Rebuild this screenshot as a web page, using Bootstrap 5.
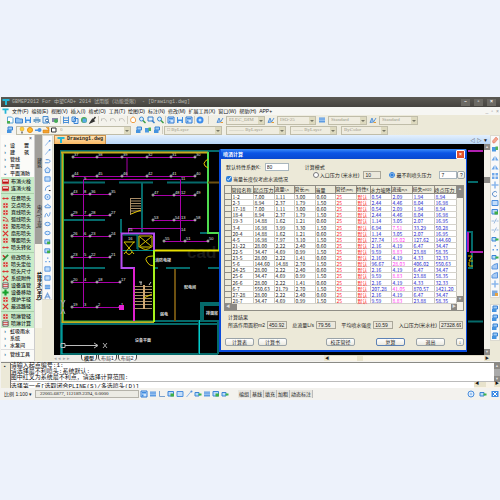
<!DOCTYPE html>
<html lang="zh-CN">
<head>
<meta charset="utf-8">
<meta name="viewport" content="width=device-width, initial-scale=1">
<title>GBMEP2012 For 中望CAD+ 2014</title>
<link href="https://cdn.jsdelivr.net/npm/bootstrap@5.3.0/dist/css/bootstrap.min.css" rel="stylesheet">
<style>
:root{--face:#ece9d8;--pale:#f3f2ee;--line:#b9b5a5}
body{background:#edf2fb;font:5px/7px "Liberation Sans","Noto Sans CJK SC",sans-serif;color:#222;overflow-x:hidden}
svg.ic{width:8px;height:8px;flex:none;display:block}
button,select,input,a{font:inherit;color:inherit}
.app-win{margin-top:97px;padding-left:1px;background:var(--pale)}
.title-bar{background:linear-gradient(#5b5953,#45433f);height:10px;color:#b9b7b0;padding:0 4px 0 1px;gap:2px;font-family:"Liberation Mono","Noto Sans CJK SC",monospace}
.title-bar .ctl{color:#fff;background:#6b6963;border:0;width:9px;height:7px;padding:0;line-height:7px;font-weight:700;margin-left:2px}
.menu-bar{height:8px;padding:0 1px;gap:3px;background:#f6f6f3}
.menu-bar svg.ic{width:7px}
.menu-bar a{color:#111;text-decoration:none;white-space:nowrap}
.mdi{color:#999;gap:3px}
.tool-row{height:10px;background:linear-gradient(90deg,#f6f5f1,#efede2 300px,var(--face) 415px);padding-left:5px}
.tool-row .grp{gap:1px}
.sep{width:1px;height:8px;background:#cfccbe;margin:0 1px}
.combo{appearance:none;height:9px;padding:0 8px 0 2px;border:1px solid #c0bda9;border-radius:0;color:#9c998c;opacity:1;background:#efecdf url("data:image/svg+xml,%3Csvg xmlns='http://www.w3.org/2000/svg' width='6' height='7'%3E%3Cpath d='M0 0h6v7H0z' fill='%23ddd9be'/%3E%3Cpath d='M1 3h4l-2 2z' fill='%23776'/%3E%3C/svg%3E") no-repeat right center;font-family:"Liberation Serif",serif;line-height:6px}
.w-38{width:39px}.w-58{width:58px}.w-46{width:47px}.w-61{width:60px}
.sty-set{gap:2px;margin-left:2px}
.layer-box{width:115px;height:9px;border:1px solid #c0bda9;background:#f6f4ea;padding-left:1px;margin-left:2px}
.layer-box .combo{border:0;height:7px;background-color:transparent}
.palette{width:34px;background:#fbfbf8;border-right:1px solid #ccc}
.palette .hd{height:7px;color:#444;padding:0 2px}
.palette button{display:flex;align-items:center;gap:2px;height:7px;line-height:7px;padding:0 0 0 1px;border:0;background:none;width:100%;white-space:nowrap;color:#222;font-weight:500;text-align:left}
.palette .arw{width:6px;color:#27638c;font-weight:700;text-align:center}
.palette svg.ic{width:7px;height:7px}
.palette .green{background:#c9ecc9;padding:1px 0}
.palette .green>div{padding-bottom:1px;margin-bottom:1px;border-bottom:1px solid #a9cfaa}
.palette .green>div:last-child{border:0;margin:0;padding:0}
.palette .spread{display:flex;justify-content:space-between;width:19px}
.last-list{height:12px;overflow:hidden;padding-top:1px;border-top:1px solid #ddd}
.side-tabs{width:7px;background:#efecd9}
.side-tabs button{writing-mode:vertical-rl;border:0;width:7px;padding:0;line-height:7px;background:#a19f9a;color:#222}
.side-tabs .t1{height:55px}.side-tabs .t2{height:54px}
.side-tabs .t3{height:84px;background:#f6f4e8;font-weight:700;color:#000}
.draw-bar{width:12px;background:var(--face)}
.draw-bar .strip,.mod-bar .strip{background:#f9f9f9;border:1px solid #dcdad0;gap:1px;padding:3px 1px 0;width:11px;align-items:center}
.draw-bar .strip{height:165px}
.draw-bar .strip svg{width:7px}
.mod-bar{width:10px;background:var(--face);gap:2px}
.mod-bar .strip{width:10px;padding:0}
.doc-tabs{height:9px;background:linear-gradient(#e4f0fd,#b8d6f8);padding-right:2px}
.doc-tabs a{background:linear-gradient(#ffe3b5,#fbb862);border:1px solid #c9924f;border-bottom:0;width:52px;color:#222;text-decoration:none;font:700 5px/7px "Liberation Mono",monospace;padding-left:2px;gap:2px}
.doc-col,.draw-area{min-width:0}
.draw-area{background:#000}
.draw-area>svg{display:block;width:429px;height:211px}
.vscroll{width:6px;background:#f4f2ea}
.vscroll span,.gbtn{display:block;width:6px;height:6px;background:#8b8985;color:#ddd;text-align:center;line-height:6px;font-size:4px}
.vscroll .thumb{margin:27px 0 auto}
.layout-tabs{height:6px;background:#ecebe6;color:#222}
.layout-tabs .nav-a{width:27px;color:#aaa;white-space:nowrap;line-height:6px}
.layout-tabs .lt{background:#fafafa;border:0;border-left:1px solid #444;border-right:1px solid #444;border-radius:0 0 4px 4px;height:6px;line-height:6px;padding:0 2px;margin-right:1px}
.hscroll{width:166px;background:#f8f3e6;border-top:1px solid #e0dbc8}
.hscroll b,.cmd-h b{display:block;width:6px;background:#e8e3cc;text-align:center;line-height:5px;font-size:4px;height:5px}
.hscroll .thumb{margin:0 auto 0 27px}
.cmd{border-top:1px solid #8a8a85;margin-top:1px;padding-left:3px;background:var(--face)}
.cmd-body{background:#fff;border-left:1px solid #777;font:6px/6px "Liberation Mono","Noto Sans CJK SC",monospace;color:#111}
.cmd-body p{margin:0;border-bottom:1px solid #bbb;white-space:nowrap}
.cmd-body .cs{background:#aaa}
.cmd-body input{border:0;padding:0;height:6px;line-height:6px;background:#fff;min-width:0}
.cmd-h{width:26px;background:#f8f3e6;height:6px}
.status{height:12px;background:var(--pale);padding:0 1px 0 3px;gap:1px}
.status .scale{width:30px;white-space:nowrap}
.status .coord{width:104px;border:1px solid #b5b3aa;height:8px;line-height:6px;background:#ecebe4;padding-left:4px;font-family:"Liberation Serif",serif;white-space:nowrap}
.status .ics{gap:1px}
.status button{border:0;border-right:1px solid #bbb;padding:0 1px;background:#e7e6e0;line-height:8px;white-space:nowrap}
/* calculation dialog, floats over the drawing */
.calc{position:absolute;left:165px;top:5px;width:248px;border:solid #0a4bdc;border-width:0 1px 2px 2px;background:var(--face);z-index:2;border-radius:2px 2px 0 0}
.calc .cap{height:10px;background:linear-gradient(#3c8cf8,#0a55e6 40%,#0848cf);color:#fff;font-weight:700;padding:0 1px 0 2px}
.calc .cap button{width:9px;height:9px;padding:0;border:1px solid #fff;border-radius:1px;background:#e2502b;line-height:7px;font-weight:700}
.calc label,.calc .lbl{white-space:nowrap;line-height:8px}
.calc .fld{height:8px;border:1px solid #a9b6bd;background:#fff;padding:0 1px;line-height:6px;border-radius:0;min-width:0}
.calc .fld.ro{background:#ebe8dc;border-color:#aaa79a}
.calc .s18{width:18px}.calc .s20{width:20px}.calc .s24{width:24px}
.calc .pt{width:6px;height:6px;margin:0 1px 0 0;accent-color:#2f7fd8;flex:none}
.calc .top-area{padding:4px 4px 0 5px;height:26px}
.calc .btn-c{width:29px;height:8px;border:1px solid #9aa3a8;border-radius:2px;background:linear-gradient(#fff,#ebe9df);padding:0;line-height:6px}
.calc .btn-c.tiny{width:8px}
.calc .btn-c.focus-b{border-color:#5d82b5}
.grid-box{margin:0 2px 0 3px;border:1px solid #8f8d85;background:#fff}
.grid-t{border-collapse:collapse;table-layout:fixed;width:100%;height:118px;font:5px/5px "Liberation Sans Narrow","Noto Sans CJK SC",sans-serif}
.grid-t th,.grid-t td{padding:0 0 0 1px;border-right:1px solid #c9c7bf;border-bottom:1px solid #d4d2cb;white-space:nowrap;color:#222;font-weight:400;line-height:5px}
.grid-t th{background:var(--face);border-color:#8f8d85;padding:0}
.grid-t .un{font-size:3px}
.grid-t .r{color:#f22}.grid-t .b{color:#22c}.grid-t .m{color:#f3e}
.grid-t .c6{width:6px}.grid-t .c14{width:14px}.grid-t .c20{width:20px}.grid-t .c21{width:21px}.grid-t .c22{width:22px}
.gs{width:6px;background:#f5f3ea}
.res{padding:2px 3px 0 7px;height:22px}
.res span{gap:2px}
.foot{padding:5px 2px 4px 4px;gap:4px}
.foot .g-a{margin-right:17px}.foot .g-b{margin-right:7px}
</style>
<script src="https://cdn.jsdelivr.net/npm/bootstrap@5.3.0/dist/js/bootstrap.bundle.min.js"></script>
</head>
<body>
<svg width="0" height="0" class="position-absolute" aria-hidden="true"><defs>
<g id="new"><path d="M3 2h8l3 3v9H3z" fill="#fff" stroke="#5aa7d8" stroke-width="2"/><path d="M2 10h6v5H2z" fill="#4cae4c"/></g>
<g id="open"><path d="M1 4h6l2 2h6v8H1z" fill="#8cc0f2" stroke="#3f80cc" stroke-width="2"/></g>
<g id="save"><path d="M2 2h12v12H2z" fill="#3e8ee0"/><path d="M4 2h8v5H4zM5 10h6v4H5z" fill="#e2f0ff"/></g>
<g id="print"><path d="M4 2h8v4H4zM1 6h14v6H1zM4 10h8v4H4z" fill="#6d9fc4"/><path d="M4 3h8v2H4zM5 11h6v2H5z" fill="#fff"/></g>
<g id="prev"><path d="M2 1h10v13H2z" fill="#dcecfb" stroke="#4a8fd0" stroke-width="2"/><circle cx="10" cy="9" r="3" fill="#fff" stroke="#2965a5" stroke-width="2"/><path d="M12 11l3 4" stroke="#2965a5" stroke-width="2"/></g>
<g id="pub"><path d="M2 4h12v8H2z" fill="#88a"/><circle cx="10" cy="10" r="4" fill="#47ad55"/></g>
<g id="cut"><path d="M3 1v14M13 1v14M3 4h10M3 9h10M3 13h10" stroke="#4a90d8" stroke-width="2"/></g>
<g id="copy"><path d="M2 2h7v9H2zM6 5h8v10H6z" fill="#d7ebff" stroke="#3b83d2" stroke-width="2"/></g>
<g id="paste"><circle cx="8" cy="8" r="6" fill="#48a64f"/><path d="M5 5h8v8H5z" fill="#58a9e8"/></g>
<g id="brush"><path d="M3 13l4-6 3 3zM8 8l5-6" stroke="#333" stroke-width="3" fill="#3867a8"/></g>
<g id="undo"><path d="M3 10V5M3 7c5-4 9-1 10 4" fill="none" stroke="#c3c2bd" stroke-width="2"/></g>
<g id="pan"><path d="M8 2c5 0 7 8 3 11H6C2 11 2 4 8 2z" fill="#fff" stroke="#f09a3e" stroke-width="2"/></g>
<g id="zoom"><circle cx="7" cy="6" r="4" fill="#d9efff" stroke="#3d88d0" stroke-width="2"/><path d="M10 9l5 5" stroke="#3d9d45" stroke-width="3"/></g>
<g id="zwin"><path d="M2 2h10v8H2z" fill="#dff0ff" stroke="#397ec9" stroke-width="2"/><path d="M10 9l5 5" stroke="#397ec9" stroke-width="3"/></g>
<g id="panel"><path d="M2 2h12v12H2z" fill="#cfe6ff" stroke="#2f78d2" stroke-width="2"/><path d="M4 4h8v3H4zM4 9h3v4H4z" fill="#3f8be0"/></g>
<g id="help"><circle cx="8" cy="8" r="7" fill="#3b8cec"/><circle cx="8" cy="8" r="3" fill="#bfe0ff"/></g>
<g id="pen"><path d="M2 13l4-9 3 8zM9 12l5-8" fill="#a9cdf4" stroke="#5a94d6" stroke-width="2"/><path d="M9 13h5" stroke="#e39a37" stroke-width="2"/></g>
<g id="bulb"><circle cx="8" cy="6" r="4" fill="#ffcf3a" stroke="#d79a14"/><path d="M6 11h4v4H6z" fill="#888"/></g>
<g id="sun"><circle cx="8" cy="8" r="5" fill="#ffbd2b" stroke="#e98d12" stroke-width="2"/></g>
<g id="vp"><path d="M2 7h12v3H2z" fill="#4b94e6"/><circle cx="11" cy="8" r="4" fill="#4b94e6"/></g>
<g id="lock"><path d="M2 8h12v6H2zM8 3h6v6" fill="#f2a12c" stroke="#d27b0d"/></g>
<g id="box"><path d="M3 4h9v8H3z" fill="#fff" stroke="#333" stroke-width="2"/></g>
<g id="layer"><path d="M4 2h9v6H4z" fill="#9ccbf5" stroke="#3a82d3" stroke-width="2"/><path d="M2 8h9v6H2z" fill="#4593df"/></g>
<g id="layg"><path d="M2 4h8v9H2z" fill="#4b99e3"/><path d="M9 3h5v7H9z" fill="#52b255"/></g>
<g id="logo"><path d="M1 2h14v4h-5v8H6V6H1z" fill="#24b6d6"/></g>
<g id="line"><path d="M3 14L13 2" stroke="#8db7ea" stroke-width="2"/><circle cx="13" cy="3" r="2" fill="#4d8fdd"/></g>
<g id="pline"><path d="M2 12h8c5 0 5-7 0-7H4" fill="none" stroke="#4d8fdd" stroke-width="2"/></g>
<g id="poly"><path d="M8 2l6 5-2 7H4L2 7z" fill="#d5e7fb" stroke="#4d8fdd" stroke-width="2"/></g>
<g id="rect"><path d="M2 3h12v10H2z" fill="#c2ddfa" stroke="#4d8fdd" stroke-width="2"/></g>
<g id="arc"><path d="M3 14Q3 3 14 3" fill="none" stroke="#4d8fdd" stroke-width="2"/><path d="M11 13h4v2h-4z"/></g>
<g id="circ"><circle cx="8" cy="8" r="6" fill="#dcebfc" stroke="#4d8fdd" stroke-width="2"/><circle cx="8" cy="8" r="1.500" fill="#4d8fdd"/></g>
<g id="cloud"><path d="M3 12Q0 7 5 7q3-6 7 0 5 1 2 5z" fill="#dcebfc" stroke="#4d8fdd" stroke-width="2"/></g>
<g id="spl"><path d="M2 13C4 0 8 5 8 8s4 7 6-6" fill="none" stroke="#4d8fdd" stroke-width="2"/></g>
<g id="ell"><ellipse cx="8" cy="8" rx="6" ry="4" fill="#dcebfc" stroke="#4d8fdd" stroke-width="2"/></g>
<g id="ins"><path d="M2 3h11v9H2z" fill="#bddafa" stroke="#3c84d8" stroke-width="2"/><path d="M7 7h7v6H7z" fill="#3fae46"/></g>
<g id="dots"><path d="M7 2h3v3H7zM3 10h3v3H3zM11 10h3v3h-3z" fill="#5e9be2"/></g>
<g id="hat"><path d="M2 3h12v10H2z" fill="#5c9be2"/><path d="M2 6h12M2 9h12" stroke="#cfe3fb"/></g>
<g id="txt"><path d="M2 14L8 2l6 12M5 10h6" fill="none" stroke="#7ca6dc" stroke-width="3"/></g>
<g id="mir"><path d="M1 13L7 4v9zM15 13L9 4v9z" fill="#6aa6ea"/></g>
<g id="arr"><path d="M2 2h5v5H2zM9 2h5v5H9zM2 9h5v5H2zM9 9h5v5H9z" fill="#6fa8ea"/></g>
<g id="mov"><path d="M8 1v14M1 8h14" stroke="#8ab6ec" stroke-width="3"/></g>
<g id="rot"><path d="M12 5a5 5 0 1 0 0 6" fill="none" stroke="#6090cc" stroke-width="2"/></g>
<g id="era"><path d="M3 10l7-8 4 4-7 8H4z" fill="#f4a58c" stroke="#d65" /></g>
<g id="grn"><path d="M2 5h8v7H2z" fill="#b7dcfa" stroke="#3d85d5" stroke-width="2"/><path d="M9 7h6v4H9z" fill="#3bb34a"/></g>
<g id="trim"><path d="M1 8h6M11 3L6 13M11 8h4" stroke="#9dbce0" stroke-width="2"/></g>
<g id="fil"><path d="M2 14V9Q4 4 13 3v11z" fill="#a9ccf4" stroke="#5b96de" stroke-width="2"/></g>
<g id="exp"><path d="M2 3h11v11H2z" fill="#7ea9dc"/><path d="M8 8h6v6H8z" fill="#e5a343"/></g>
<g id="hr"><path d="M1 4h14v9H1z" fill="#fff" stroke="#c22" stroke-width="2"/><path d="M2 8h12v4H2z" fill="#b11"/></g>
<g id="h4"><path d="M3 3h4v4H3zM9 3h4v4H9zM3 9h4v4H3zM9 9h4v4H9z" fill="#d33"/><path d="M1 8h14M8 1v14" stroke="#e88"/></g>
<g id="h2"><path d="M1 8h14" stroke="#c33" stroke-width="2"/><circle cx="4" cy="8" r="2.500" fill="#d33"/><circle cx="12" cy="8" r="2.500" fill="#d33"/></g>
<g id="ha"><path d="M2 3q11 0 12 11" fill="none" stroke="#c33" stroke-width="2"/><path d="M2 8h4v4H2zM8 10h3v3H8z" fill="#d33"/></g>
<g id="hx"><path d="M2 2l12 12M14 2L2 14" stroke="#d33" stroke-width="3"/></g>
<g id="xb"><path d="M1 2h14v12H1z" fill="#3c8be4"/><path d="M4 4l8 8M12 4l-8 8" stroke="#fff" stroke-width="2"/></g>
<g id="gx"><path d="M2 14L14 2" stroke="#2b8a3a" stroke-width="4"/><path d="M2 3l5 5" stroke="#c22" stroke-width="3"/></g>
<g id="gp"><path d="M8 1v14M1 8h14" stroke="#17a02c" stroke-width="5"/></g>
<g id="tb"><path d="M2 2h12v12H2z" fill="#fff" stroke="#555" stroke-width="2"/><path d="M2 6h12M2 10h12" stroke="#b33" stroke-width="2"/></g>
<g id="ax"><path d="M3 2v11h11" fill="none" stroke="#7aa0cc" stroke-width="2"/></g>
</defs></svg>

<main class="app-win d-flex flex-column">
<header class="title-bar d-flex align-items-center">
 <svg class="ic" viewBox="0 0 16 16"><use href="#logo"/></svg>
 <span class="me-auto text-nowrap">GBMEP2012 For 中望CAD+ 2014 试用版（功能受限） - [Drawing1.dwg]</span>
 <button class="ctl" aria-label="最小化">–</button><button class="ctl" aria-label="还原">▫</button><button class="ctl" aria-label="关闭">×</button>
</header>
<nav class="menu-bar d-flex align-items-center">
 <svg class="ic" viewBox="0 0 16 16"><use href="#logo"/></svg>
 <a href="#">文件(F)</a><a href="#">编辑(E)</a><a href="#">视图(V)</a><a href="#">插入(I)</a><a href="#">格式(O)</a><a href="#">工具(T)</a><a href="#">绘图(D)</a><a href="#">标注(N)</a><a href="#">修改(M)</a><a href="#">扩展工具(X)</a><a href="#">窗口(W)</a><a href="#">帮助(H)</a><a href="#">APP+</a>
 <span class="mdi ms-auto d-flex"><span>_</span><span>▫</span><span>×</span></span>
</nav>
<div class="tool-row d-flex align-items-center">
 <div class="grp d-flex" data-icons="new open save print prev pub"></div><i class="sep"></i>
 <div class="grp d-flex" data-icons="cut copy paste brush"></div><i class="sep"></i>
 <div class="grp d-flex" data-icons="undo undo undo"></div><i class="sep"></i>
 <div class="grp d-flex" data-icons="pan zoom zwin zoom"></div><i class="sep"></i>
 <div class="grp d-flex" data-icons="panel save panel"></div><i class="sep"></i>
 <div class="grp d-flex" data-icons="help"></div><i class="sep ms-1"></i>
 <div class="sty-set d-flex align-items-center">
 <div class="ms-1" data-icons="pen"></div><select class="combo w-38" disabled aria-label="文字样式"><option>ELEC_DIM</option></select>
 <div data-icons="pen"></div><select class="combo w-38" disabled aria-label="标注样式"><option>ISO-25</option></select>
 <div data-icons="hat"></div><select class="combo w-38" disabled aria-label="表格样式"><option>Standard</option></select>
 <div data-icons="pen"></div><select class="combo w-38" disabled aria-label="引线样式"><option>Standard</option></select>
 </div>
</div>
<div class="tool-row d-flex align-items-center">
 <div data-icons="layer"></div>
 <div class="layer-box d-flex align-items-center"><div class="d-flex" data-icons="bulb sun vp lock box"></div><select class="combo flex-fill" aria-label="图层"><option>0</option></select></div>
 <div class="grp d-flex ms-1" data-icons="layer layg layer"></div><i class="sep"></i>
 <div class="d-flex gap-1">
 <select class="combo w-58" aria-label="颜色"><option>□ ByLayer</option></select>
 <select class="combo w-61" aria-label="线型"><option>——— ByLayer</option></select>
 <select class="combo w-46" aria-label="线宽"><option>—— ByLayer</option></select>
 <select class="combo w-46" aria-label="打印样式"><option>ByColor</option></select>
 </div>
</div>

<div class="d-flex">
 <aside class="palette flex-shrink-0">
  <div class="hd d-flex justify-content-between"><span></span><span>×</span></div>
  <div id="pa"></div>
  <div class="green" id="pb"></div>
  <div id="pc"></div>
  <div class="last-list" id="pd"></div>
 </aside>
 <div class="side-tabs d-flex flex-column flex-shrink-0">
  <button class="t1">建筑</button><button class="t2">电气(工业)</button><button class="t3">给排水(室内)</button>
 </div>
 <div class="draw-bar flex-shrink-0"><div class="strip d-flex flex-column" data-icons="line line pline poly rect arc circ cloud spl ell ell ins ins dots rect rect hat txt"></div></div>
 <section class="doc-col flex-fill d-flex flex-column position-relative">
  <div class="doc-tabs d-flex align-items-end justify-content-between"><a href="#" class="d-flex"><svg class="ic" viewBox="0 0 16 16"><use href="#logo"/></svg>Drawing1.dwg</a><span>◁ ▷ ▼</span></div>
  <div class="d-flex position-relative">
   <div class="draw-area flex-fill overflow-hidden">
   <svg viewBox="54 144 429 211" id="dwg" fill="none" role="img" aria-label="喷淋平面图">
    <text x="187" y="258" font-size="17" font-weight="700" font-family="Liberation Sans" fill="#1a1a1a">cad</text>
    <g stroke="#056a6a" stroke-width="2">
     <path d="M60 151H222M61 150V354M62 182.500H105M119 182.500H153M167 182.500H207M62 220H105M142 183V232M121 219V233M62 268H105M155 268H158M166 268H190M208 268H219M200 233H208M61 324H219M154 321H219M201 322V303H219M203 322V305H219M199 320V354M218 322V354M60 354H218M468 182H478M468 321.500H484M467 232H472V268H468"/></g>
    <path d="M62 322V354M199.500 320V354" stroke="#0cc"/>
    <g stroke="#a800a8"><path d="M74 157.500H196M74 176.500H196M83.500 307V179.500H180.500V241M127 157V176M73 194.500H111M73 215.500H111M73 236.500H111M73 257.500H111M73 282.500H121M73 307.500H121M154 195.500H196M154 220.500H196M128.500 233V228.500H180M165 241.500H209"/></g>
    <g stroke="#c8c8c8" stroke-width="1" id="nodes"></g>
    <path d="M61 152.500H208M62.500 152V322H154" stroke="#c9a91c" stroke-width="2"/>
    <path d="M63.500 154V321H153" stroke="#3db23d"/>
    <path d="M208 152V233H219V250" stroke="#4fdc4f" stroke-width="2"/><path d="M154 250.500H219" stroke="#e8e000" stroke-width="2"/>
    <path d="M154 250V322" stroke="#a6f21c" stroke-width="2"/>
    <path d="M154 250V233.500H121.500V268H134V321" stroke="#b54df0" stroke-width="2"/><path d="M134 268V321" stroke="#e01fd0" stroke-width="2"/>
    <path d="M122 250.500H153M138 234V250M123 235H137V249" stroke="#088"/>
    <path d="M208 182.500H219M175 269V321" stroke="#6d5010" stroke-width="2"/>
    <path d="M130.500 198V215M131 198.500H141M131 201H141M131 203.500H141M131 206H141M131 208.500H141M131 211H141M134 286.500H152M134 289.500H152M134 292.500H152M134 295.500H152M134 298.500H152M134 301.500H152M134 304.500H152M134 308.500H152" stroke="#a98c66"/>
    <path d="M144 285V309" stroke="#d0a873" stroke-width="2"/>
    <path d="M131 214l10-4M144 298l8-4M208 159q-8 5 0 9" stroke="#e6c800"/>
    <path d="M124 242l10 12M134 242l-10 12M124 242h11M139 236h13v11h-13zM140 237l11 9M151 237l-11 9M140 247q6 5 11 0M153 256q-10 0-6 6q2 4 7 4M126 252q3 5 6 0" stroke="#d8c400"/>
    <rect x="119" y="305" width="5" height="5" fill="#e61fd6"/>
    <g fill="#ddd" font-size="4" font-family="Noto Sans CJK SC,sans-serif" font-weight="700"><text x="155" y="262">消防电梯</text><text x="184" y="289">配电间</text><text x="160" y="316">弱电</text><text x="135" y="342">设备平面</text><text x="206" y="315">排烟房</text></g>
    <path d="M61 343.500h4v4h-4zM65 345.500H97M94 343l4 2.500-4 2.500" stroke="#bbb"/><path d="M103 343l4 5M107 343l-4 5M61 300l2 4 2-4M63 304v3M61 314l2-5 2 5" stroke="#aaa"/>
    <path d="M468 151H484M470 252H484M468 232V252" stroke="#b020b0" stroke-width="2"/><path d="M468 256h4l-3 5h4M469 262v4h4" stroke="#c8b000"/>
    <path d="M139 282h3M141 282v3M151 282l-2 3" stroke="#ccc"/>
   </svg>
   </div>
   <div class="vscroll flex-shrink-0 d-flex flex-column"><span>▲</span><span class="thumb"></span><span>▼</span></div>

   <form class="calc" onsubmit="return false">
    <div class="cap d-flex align-items-center justify-content-between"><span>喷洒计算</span><button type="button" aria-label="关闭">×</button></div>
    <div class="top-area d-flex">
     <div>
      <div class="d-flex align-items-center gap-1"><label for="kf">默认特性系数K:</label><input id="kf" class="fld s24" value="80"></div>
      <div class="d-flex align-items-center mt-1"><input class="pt" type="checkbox" id="ck" checked><label for="ck">当量长度仅考虑水流情况</label></div>
     </div>
     <div class="ms-3 flex-fill">
      <div class="lbl">计算模式</div>
      <div class="d-flex align-items-center ps-2"><input class="pt" type="radio" name="md" id="m1"><label for="m1">入口压力 (米水柱)</label><input class="fld ro s18 ms-1" disabled value="10" aria-label="入口压力"><input class="pt ms-2" type="radio" name="md" id="m2" checked><label for="m2">最不利喷头压力</label><input class="fld s18 ms-2" value="7" aria-label="最不利喷头压力值"><button class="btn-c tiny ms-auto" type="button">?</button></div>
     </div>
    </div>
    <div class="grid-box d-flex">
     <div class="flex-fill">
      <table class="grid-t"><colgroup><col class="c6"><col class="c22"><col class="c21"><col class="c20"><col class="c21"><col class="c20"><col class="c21"><col class="c14"><col class="c21"><col class="c21"><col class="c22"><col></colgroup>
      <thead><tr><th></th><th>管段名称</th><th>起点压力</th><th>流量<span class="un">L/s</span></th><th>管长<span class="un">(m)</span></th><th>当量</th><th>管径<span class="un">(mm)</span></th><th>特性<span class="un">K</span></th><th>水力坡降</th><th>流速<span class="un">m/s</span></th><th>损失<span class="un">mH2O</span></th><th>终点压力</th></tr></thead><tbody id="rows"></tbody></table>
      <div class="d-flex gs w-100"><span class="gbtn">◀</span><span class="gbtn"></span><span class="gbtn ms-auto">▶</span></div>
     </div>
     <div class="gs d-flex flex-column"><span class="gbtn">▲</span><span class="gbtn"></span><span class="gbtn mt-auto mb-2">▼</span></div>
    </div>
    <div class="res"><div class="lbl">计算结果</div>
     <div class="d-flex align-items-center justify-content-between">
      <span class="d-flex"><label for="r1">所选作用面积m2</label><input id="r1" class="fld ro s20" readonly value="450.92"></span>
      <span class="d-flex"><label for="r2">总流量L/s</label><input id="r2" class="fld ro s20" readonly value="79.56"></span>
      <span class="d-flex"><label for="r3">平均喷水强度</label><input id="r3" class="fld ro s20" readonly value="10.59"></span>
      <span class="d-flex"><label for="r4">入口压力(米水柱)</label><input id="r4" class="fld ro s24" readonly value="27328.69"></span>
     </div></div>
    <div class="foot d-flex"><button class="btn-c">计算表</button><button class="btn-c">计算书</button><button class="btn-c g-a ms-auto">校正管径</button><button class="btn-c focus-b g-b">复算</button><button class="btn-c g-b">退出</button><button class="btn-c tiny">↓</button></div>
   </form>
  </div>
  <div class="layout-tabs d-flex"><span class="nav-a">◂ ◂ ▸ ▸</span><button class="lt fw-bold">模型</button><button class="lt">布局1</button><button class="lt">布局2</button>
   <div class="hscroll d-flex ms-auto"><b>◀</b><b class="thumb"></b><b>▶</b></div></div>
 </section>
 <div class="mod-bar d-flex flex-column flex-shrink-0"><div class="strip d-flex flex-column" data-icons="era layg mir mir arr mov rot rect ins trim trim grn dots grn fil fil mov exp"></div><div class="strip d-flex flex-column mt-1" data-icons="layer layer layer layer"></div></div>
</div>

<div class="cmd d-flex">
 <span class="pe-1">▪</span>
 <div class="cmd-body flex-fill">
  <div class="d-flex"><p class="flex-fill">请输入起点编号:1:<br>请选择最不利喷头:系统默认:<br>图中红叉为系统最不利点，请选择计算范围:</p><div class="cs d-flex flex-column justify-content-between"><span class="gbtn">▲</span><span class="gbtn">▼</span></div></div>
  <div class="d-flex"><input class="flex-fill" aria-label="命令行" value="选择第一点[选取闭合PLINE(S)/多选喷头(D)]"><div class="cmd-h d-flex"><b>◀</b><b></b><b class="ms-auto">▶</b></div></div>
 </div>
</div>
<footer class="status d-flex align-items-center">
 <span class="scale">比例 1:100 ▾</span><span class="coord">22005.6877, 112189.2394, 0.0000</span>
 <div class="ics d-flex" data-icons="panel hat ax ins rect line grn hat ins grn"></div>
 <div class="d-flex ms-2"><button>编组</button><button>基线</button><button>填充</button><button>加粗</button><button>动态标注</button></div>
 <div class="d-flex gap-1 ms-auto" data-icons="circ grn xb"></div>
</footer>
</main>
<script>
const ic = n => `<svg class="ic" viewBox="0 0 16 16" aria-hidden="true"><use href="#${n}"/></svg>`;
document.querySelectorAll('[data-icons]').forEach(e => e.innerHTML = e.dataset.icons.split(' ').map(ic).join(''));
const fold = (t, a = '›') => `<button><span class="arw">${a}</span>${t.includes(' ') ? '<span class="spread">' + t.split(' ').map(c => `<span>${c}</span>`).join('') + '</span>' : t}</button>`;
pa.innerHTML = ['设 置', '建 筑', '管线', '平面'].map(t => fold(t)).join('') + fold('平面消防', '⌄');
pb.innerHTML = [
 [['hr', '布消火栓'], ['hr', '连消火栓']],
 [['h2', '任意喷头'], ['h4', '交点喷头'], ['h4', '直线喷头'], ['ha', '弧线喷头'], ['h4', '矩形喷头'], ['hx', '扇形喷头'], ['h4', '等距喷头'], ['h2', '喷头转化']],
 [['gx', '修改喷头'], ['h4', '喷头定位'], ['h2', '喷头尺寸'], ['hx', '系统附件'], ['tb', '设备连管'], ['gp', '设备移动'], ['h4', '保护半径'], ['hx', '最远路径']],
 [['h4', '喷淋管径'], ['tb', '喷淋计算']]
].map(g => '<div>' + g.map(([i, t]) => `<button>${ic(i)}${t}</button>`).join('') + '</div>').join('');
pc.innerHTML = ['虹吸雨水', '系统', '水泵间'].map(t => fold(t)).join('');
pd.innerHTML = ['管线工具'].map(t => fold(t)).join('');
rows.innerHTML = `1-2 7.00 1.11 3.00 0.60 0.54 2.09 1.94 8.94
2-3 8.94 2.37 1.79 1.50 2.44 4.46 8.04 16.98
17-18 7.00 1.11 3.00 0.60 0.54 2.09 1.94 8.94
18-4 8.94 2.37 1.79 1.50 2.44 4.46 8.04 16.98
19-3 14.88 1.62 1.21 0.60 1.14 3.05 2.07 16.95
3-4 16.98 3.99 3.30 1.50 6.94 7.51 33.29 50.28
20-4 14.88 1.62 1.21 0.60 1.14 3.05 2.07 16.95
4-5 16.98 7.97 3.10 1.50 27.74 15.02 127.62 144.60
21-22 28.00 2.22 2.40 0.60 2.16 4.19 6.47 34.47
22-5 34.47 4.69 0.99 1.50 9.59 8.83 23.88 58.35
23-5 28.00 2.22 1.41 0.60 2.16 4.19 4.33 32.33
5-6 144.60 14.88 2.70 1.50 96.67 28.03 406.02 550.63
24-25 28.00 2.22 2.40 0.60 2.16 4.19 6.47 34.47
25-6 34.47 4.69 0.99 1.50 9.59 8.83 23.88 58.35
26-6 28.00 2.22 1.41 0.60 2.16 4.19 4.33 32.33
6-7 550.63 21.79 2.70 1.50 207.28 41.05 870.57 1421.20
27-28 28.00 2.22 2.40 0.60 2.16 4.19 6.47 34.47
28-7 34.47 4.69 0.99 1.50 9.59 8.83 23.88 58.35`.split('\n').map(l => {
 const c = l.split(' ');
 return '<tr><th></th>' + c.slice(0, 5).map(v => `<td>${v}</td>`).join('') + '<td class="r">25</td><td class="r">默认</td>' +
  c.slice(5).map((v, i) => `<td class="${i === 1 && +v > 5 ? 'm' : 'b'}">${v}</td>`).join('') + '</tr>';
}).join('');
// sprinkler heads: x, y, label
nodes.innerHTML = [[74,157,37],[98,157,38],[123,157,39],[148,157,32],[172,157,31],[196,157,30],[74,176,44],[98,176,45],[123,176,46],[148,176,42],[172,176,41],[196,176,40],
 [73,194,43],[91,194,36],[111,194,35],[73,215,29],[91,215,28],[111,215,27],[73,236,26],[91,236,23],[111,236,24],[73,257,23],[91,257,22],[111,257,21],[73,282,20],[98,282,18],[121,282,17],[73,307,19],[98,307,2],[121,307,1],
 [154,195,47],[175,195,48],[196,195,49],[154,220,53],[175,220,54],[196,220,58],[165,241,55],[186,241,51],[209,241,50],[84,194,8],[84,215,7],[84,236,6],[84,257,5],[84,282,4],[84,307,3],[181,195,12],[181,220,13],[181,232,14],[128,232,15],[128,241,16],[84,181,9],[181,181,11]]
 .map(([x, y, t], i) => (i < 39 ? `<circle cx="${x - 1}" cy="${y}" r="1"/>` : '') + `<text x="${x}" y="${y - 1}" font-size="4" fill="#e8e8e8" stroke="none" font-family="Liberation Sans">${t}</text>`).join('');
</script>
</body>
</html>
